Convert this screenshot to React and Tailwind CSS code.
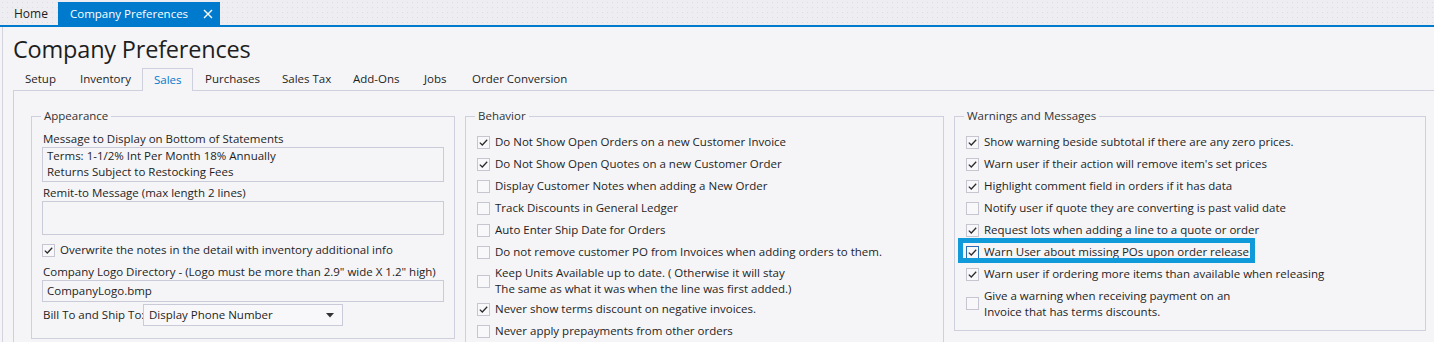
import React from "react";

const F = "font-['Open_Sans',sans-serif]";

function Check({ checked, focus }) {
  return (
    <span
      className={
        "w-[13px] h-[13px] border flex items-center justify-center shrink-0 bg-[#f8f8fa] " +
        (focus ? "border-[#2c6db3]" : "border-[#c6c6d0]")
      }
    >
      {checked && (
        <svg width="11" height="11" viewBox="0 0 11 11">
          <path d="M1.8 5.6 L4.3 8 L9.2 2.8" stroke="#2a2a2a" strokeWidth="1.25" fill="none" />
        </svg>
      )}
    </span>
  );
}

function Row({ checked, children, focus }) {
  return (
    <div className="flex items-center h-[22px] gap-[5px]">
      <Check checked={checked} focus={focus} />
      <span className="leading-[16px] whitespace-nowrap">{children}</span>
    </div>
  );
}

function Row2({ checked, l1, l2, cls }) {
  return (
    <div className={"flex items-center gap-[5px] " + cls}>
      <Check checked={checked} />
      <span className="leading-[16px] whitespace-nowrap">
        {l1}
        <br />
        {l2}
      </span>
    </div>
  );
}

function Group({ title, className, children }) {
  return (
    <fieldset className={"border border-[#cfd0de] shrink-0 " + className}>
      <legend className="ml-[9px] px-[3px] leading-[16px] text-[#333]">{title}</legend>
      {children}
    </fieldset>
  );
}

const tabs = [
  ["Setup", "w-[55px]"],
  ["Inventory", "w-[74px]"],
  ["Sales", "w-[51px]"],
  ["Purchases", "w-[77px]"],
  ["Sales Tax", "w-[71px]"],
  ["Add-Ons", "w-[71px]"],
  ["Jobs", "w-[48px]"],
  ["Order Conversion", "w-[120px]"],
];

export default function App() {
  return (
    <div className={"w-[1434px] h-[342px] overflow-hidden bg-[#f5f5f8] text-[#1e1e1e] text-[11.5px] " + F}>
      {/* top document tab strip */}
      <div className="h-[25px] flex items-end bg-[#eeeef2] bg-[radial-gradient(circle,#dcdce6_0.7px,transparent_0.9px)] bg-[length:5px_5px]">
        <div className="h-[23px] w-[58px] flex items-center pl-[14px] text-[12px] text-[#1e1e1e]">Home</div>
        <div className="h-[23px] w-[162px] bg-[#007acc] text-white flex items-center pl-[12px] pr-[6px] text-[11.5px]">
          <span className="flex-1">Company Preferences</span>
          <svg width="10" height="10" viewBox="0 0 10 10" className="mr-[1px]">
            <path d="M1 1 L9 9 M9 1 L1 9" stroke="#fff" strokeWidth="1.4" />
          </svg>
        </div>
      </div>
      <div className="h-[2px] bg-[#007acc]" />

      <div className="pl-[2px] h-[315px]">
        <div className="border-l border-[#d3d3e0] pl-[10px] h-full flex flex-col">
          <div className="h-[41px] pt-[6px] shrink-0">
            <div className="h-[32px] leading-[32px] text-[23.5px] tracking-[-0.2px] text-[#1e1e1e]">Company Preferences</div>
          </div>

          <div className="h-[22px] flex shrink-0">
            {tabs.map(([t, w]) =>
              t === "Sales" ? (
                <div
                  key={t}
                  className={"h-[23px] relative z-10 bg-[#f5f5f8] border-t border-l border-r border-[#cfd0de] flex items-center pl-[11px] text-[#007acc] " + w}
                >
                  {t}
                </div>
              ) : (
                <div key={t} className={"h-[22px] flex items-center pl-[12px] " + w}>
                  {t}
                </div>
              )
            )}
          </div>

          <div className="flex-1 border-l border-t border-[#cfd0de] pt-[17px] pl-[17px] flex items-start gap-[10px]">
            <Group title="Appearance" className="w-[424px]">
              <div className="px-[10px] pt-[7px] pb-[12px]">
                <div className="h-[16px] leading-[16px] pl-[1px]">Message to Display on Bottom of Statements</div>
                <div className="h-[35px] border border-[#cacbd8] pl-[4px] leading-[16px]">
                  Terms: 1-1/2% Int Per Month 18% Annually
                  <br />
                  Returns Subject to Restocking Fees
                </div>
                <div className="mt-[3px] h-[16px] leading-[16px] pl-[1px]">Remit-to Message (max length 2 lines)</div>
                <div className="h-[34px] border border-[#cacbd8]" />
                <div className="mt-[4px]">
                  <Row checked>Overwrite the notes in the detail with inventory additional info</Row>
                </div>
                <div className="mt-[3px] h-[16px] leading-[16px] pl-[1px] whitespace-nowrap">
                  Company Logo Directory - (Logo must be more than 2.9" wide X 1.2" high)
                </div>
                <div className="h-[22px] border border-[#cacbd8] pl-[4px] flex items-center">CompanyLogo.bmp</div>
                <div className="mt-[2px] h-[22px] flex items-center">
                  <span className="pl-[1px] w-[101px] whitespace-nowrap">Bill To and Ship To:</span>
                  <div className="w-[200px] h-[22px] border border-[#cacbd8] bg-[#f8f8fa] flex items-center pl-[5px] pr-[8px]">
                    <span className="flex-1">Display Phone Number</span>
                    <svg width="8" height="5" viewBox="0 0 8 5">
                      <path d="M0 0 H8 L4 4.5 Z" fill="#333" />
                    </svg>
                  </div>
                </div>
              </div>
            </Group>

            <Group title="Behavior" className="w-[479px]">
              <div className="px-[11px] pt-[7px] pb-[12px]">
                <Row checked>Do Not Show Open Orders on a new Customer Invoice</Row>
                <Row checked>Do Not Show Open Quotes on a new Customer Order</Row>
                <Row>Display Customer Notes when adding a New Order</Row>
                <Row>Track Discounts in General Ledger</Row>
                <Row>Auto Enter Ship Date for Orders</Row>
                <Row>Do not remove customer PO from Invoices when adding orders to them.</Row>
                <Row2
                  cls="h-[34px] pt-[2px]"
                  l1="Keep Units Available up to date. ( Otherwise it will stay"
                  l2="The same as what it was when the line was first added.)"
                />
                <div className="mt-[1px]">
                  <Row checked>Never show terms discount on negative invoices.</Row>
                </div>
                <Row>Never apply prepayments from other orders</Row>
              </div>
            </Group>

            <Group title="Warnings and Messages" className="w-[472px]">
              <div className="px-[11px] pt-[7px] pb-[11px]">
                <Row checked>Show warning beside subtotal if there are any zero prices.</Row>
                <Row checked>Warn user if their action will remove item's set prices</Row>
                <Row checked>Highlight comment field in orders if it has data</Row>
                <Row>Notify user if quote they are converting is past valid date</Row>
                <Row checked>Request lots when adding a line to a quote or order</Row>
                <div className="relative">
                  <Row checked focus>Warn User about missing POs upon order release</Row>
                  <span className="absolute left-[-8px] top-[-3px] w-[297px] h-[25px] border-[5px] border-[#109ada]" />
                </div>
                <Row checked>Warn user if ordering more items than available when releasing</Row>
                <Row2
                  cls="h-[34px] pt-[3px]"
                  l1="Give a warning when receiving payment on an"
                  l2="Invoice that has terms discounts."
                />
              </div>
            </Group>
          </div>
        </div>
      </div>
    </div>
  );
}
